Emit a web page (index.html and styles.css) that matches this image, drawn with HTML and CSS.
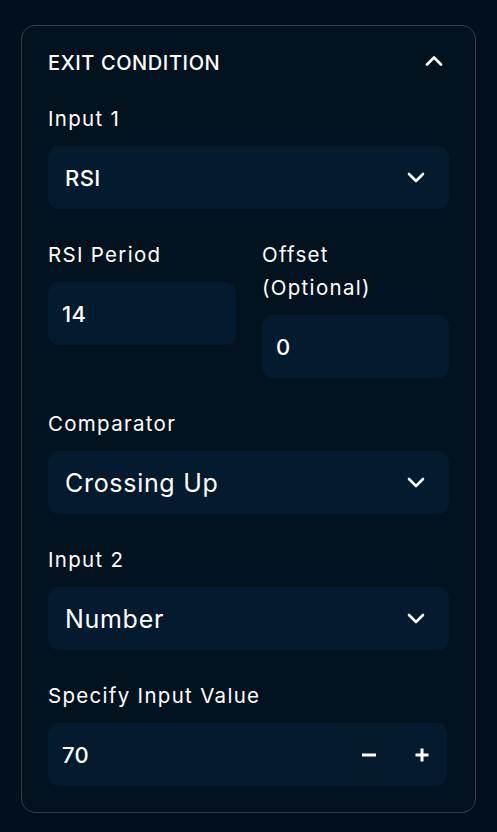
FILE: index.html
```html
<!DOCTYPE html>
<html lang="en">
<head>
<meta charset="utf-8">
<title>Exit Condition</title>
<link rel="stylesheet" href="styles.css">
</head>
<body>
<section class="card">
  <header class="card-head">
    <h2 class="card-title">EXIT CONDITION</h2>
    <svg class="chev" width="18" height="11" viewBox="0 0 18 11"><path d="M2 9.5 L9 2.5 L16 9.5" fill="none" stroke="#fff" stroke-width="2.6" stroke-linecap="round" stroke-linejoin="round"/></svg>
  </header>

  <div class="field">
    <label class="label">Input 1</label>
    <div class="box select"><span class="val">RSI</span>
      <svg class="chev" width="18" height="11" viewBox="0 0 18 11"><path d="M2 2 L9 9 L16 2" fill="none" stroke="#fff" stroke-width="2.6" stroke-linecap="round" stroke-linejoin="round"/></svg>
    </div>
  </div>

  <div class="row">
    <div class="field">
      <label class="label">RSI Period</label>
      <div class="box"><span class="val">14</span></div>
    </div>
    <div class="field">
      <label class="label">Offset<br>(Optional)</label>
      <div class="box"><span class="val">0</span></div>
    </div>
  </div>

  <div class="field">
    <label class="label">Comparator</label>
    <div class="box select"><span class="val big">Crossing Up</span>
      <svg class="chev" width="18" height="11" viewBox="0 0 18 11"><path d="M2 2 L9 9 L16 2" fill="none" stroke="#fff" stroke-width="2.6" stroke-linecap="round" stroke-linejoin="round"/></svg>
    </div>
  </div>

  <div class="field">
    <label class="label">Input 2</label>
    <div class="box select"><span class="val big">Number</span>
      <svg class="chev" width="18" height="11" viewBox="0 0 18 11"><path d="M2 2 L9 9 L16 2" fill="none" stroke="#fff" stroke-width="2.6" stroke-linecap="round" stroke-linejoin="round"/></svg>
    </div>
  </div>

  <div class="field">
    <label class="label">Specify Input Value</label>
    <div class="box stepper">
      <span class="val">70</span>
      <button class="step" type="button" aria-label="decrease"><svg width="16" height="16" viewBox="0 0 16 16"><path d="M1 8 H15" stroke="#fff" stroke-width="3"/></svg></button>
      <button class="step" type="button" aria-label="increase"><svg width="16" height="16" viewBox="0 0 16 16"><path d="M1.5 8 H14.5 M8 1.5 V14.5" stroke="#fff" stroke-width="3"/></svg></button>
    </div>
  </div>
</section>
</body>
</html>
```
FILE: styles.css
```css
html, body {
  margin: 0;
  padding: 0;
  background: #020f1c;
}
body {
  width: 497px;
  height: 832px;
  padding: 25px 21px 0 21px;
  box-sizing: border-box;
  font-family: Inter, "Noto Sans", sans-serif;
  color: #fff;
}
.card {
  border: 1px solid #323d4a;
  border-radius: 14px;
  background: #03121f;
  padding: 20px 26px 26px 26px;
  display: flex;
  flex-direction: column;
  gap: 29px;
}
.card-head {
  display: flex;
  align-items: center;
  justify-content: space-between;
  height: 34px;
  margin-bottom: -7px;
}
.card-title {
  margin: 0;
  font-size: 20px;
  font-weight: 500;
  letter-spacing: 0.6px;
}
.card-head .chev {
  margin-right: 6px;
  margin-top: -5px;
}
.field {
  display: flex;
  flex-direction: column;
  gap: 11px;
}
.label {
  font-size: 20.5px;
  line-height: 33px;
  font-weight: 400;
  letter-spacing: 1.3px;
}
.row {
  display: grid;
  grid-template-columns: 188px 187px;
  column-gap: 26px;
  align-items: start;
}
.box {
  height: 63px;
  border-radius: 11px;
  background: #041a2e;
  display: flex;
  align-items: center;
  padding: 0 14px;
  box-sizing: border-box;
}
.select {
  padding: 0 24px 0 17px;
  justify-content: space-between;
}
.val {
  font-size: 22px;
  font-weight: 500;
  letter-spacing: 0.4px;
}
.val.big {
  font-size: 25px;
  font-weight: 400;
  letter-spacing: 0.7px;
}
.stepper {
  padding-right: 0;
  margin-right: 2px;
  overflow: hidden;
}
.stepper .val {
  flex: 1;
}
.step {
  width: 51px;
  height: 100%;
  border: 0;
  margin: 0;
  padding: 0;
  background: #051a2d;
  display: flex;
  align-items: center;
  justify-content: center;
  cursor: pointer;
}
.step:first-of-type {
  padding-right: 4px;
}
.step + .step {
  background: #041a2e;
}
```
